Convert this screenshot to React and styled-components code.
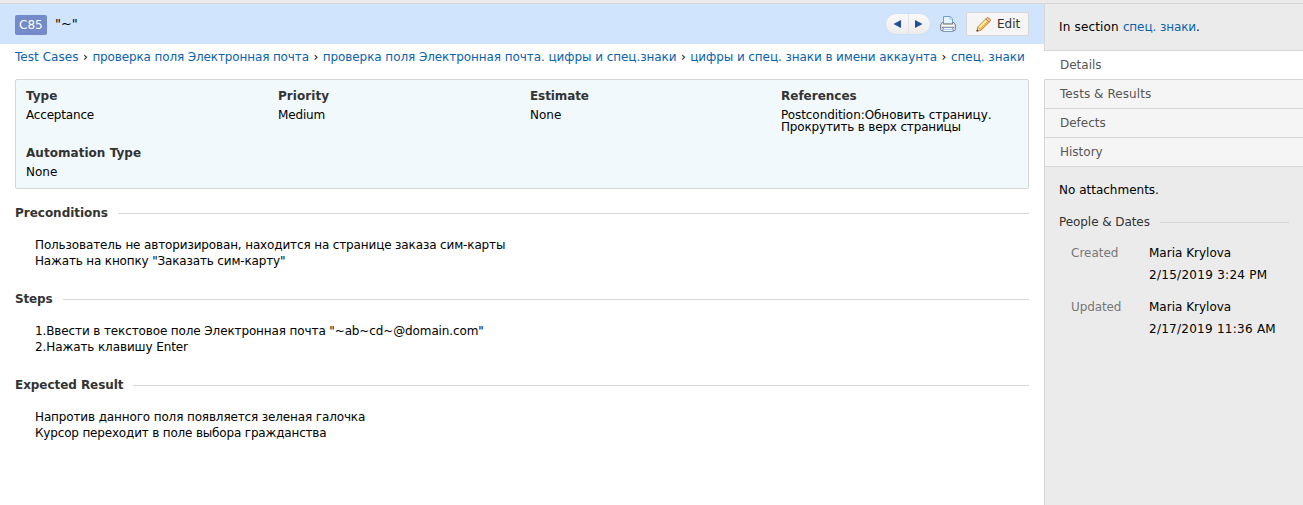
import React from "react";
import styled, { createGlobalStyle } from "styled-components";

const Global = createGlobalStyle`
  * { box-sizing: border-box; }
  body {
    margin: 0;
    background: #fff;
    color: #000;
    font: 12px/12px Verdana, "DejaVu Sans", sans-serif;
    overflow: hidden;
  }
`;

const Page = styled.div`
  display: flex;
  flex-direction: column;
  height: 505px;
`;
const TopStrip = styled.div`
  flex: 0 0 4px;
  background: #ebebeb;
  border-bottom: 1px solid #d6d6d6;
`;
const Columns = styled.div`
  flex: 1;
  display: flex;
`;
const Main = styled.main`
  width: 1044px;
`;
const Text = styled.span`
  letter-spacing: ${(p) => p.$ls || 0}px;
  white-space: nowrap;
`;
const Header = styled.header`
  display: flex;
  align-items: center;
  height: 40px;
  padding: 0 15px;
  background: #d0e4fd;
`;
const CaseId = styled.span`
  width: 32px;
  height: 20px;
  padding-left: 4px;
  border-radius: 2px;
  background: #738acb;
  color: #fff;
  line-height: 20px;
  margin: 2px 8px 0 0;
`;
const Title = styled.h1`
  flex: 1;
  margin: 0;
  font-size: 13px;
  font-weight: normal;
`;
const Pager = styled.div`
  display: flex;
  width: 44px;
  height: 20px;
  border-radius: 10px;
  overflow: hidden;
  background: linear-gradient(#fafafa, #ececec);
  box-shadow: 0 0 1px #b9c3d0;
  margin-right: 10px;
`;
const PagerButton = styled.span`
  flex: 1;
  display: flex;
  align-items: center;
  justify-content: center;
  & + & { border-left: 1px solid #dfe4ea; }
`;
const EditButton = styled.span`
  display: flex;
  align-items: center;
  width: 63px;
  height: 24px;
  margin-left: 10px;
  padding-left: 9px;
  gap: 6px;
  border: 1px solid #d6d6d6;
  border-radius: 2px;
  background: #f5f5f5;
  color: #333;
`;
const Breadcrumb = styled.nav`
  height: 35px;
  padding: 7px 15px 0;
  white-space: nowrap;
`;
const Separator = styled.span`
  margin: 0 0.7px;
`;
const Link = styled.a`
  color: #0b62ad;
  letter-spacing: ${(p) => p.$ls || 0}px;
`;
const Info = styled.section`
  display: grid;
  grid-template-columns: 252px 252px 251px 1fr;
  grid-template-rows: 57px 1fr;
  height: 110px;
  margin: 0 15px;
  padding: 10px 0 0 10px;
  border: 1px solid #d6d6d6;
  border-radius: 2px;
  background: #f1f9fd;
`;
const FieldName = styled.div`
  margin-bottom: 7px;
  font-weight: bold;
  color: #333;
`;
const Section = styled.section`
  height: 86px;
  padding: 18px 15px 0;
`;
const Heading = styled.h2`
  display: flex;
  align-items: center;
  gap: 10px;
  margin: 0;
  font-size: 12px;
  line-height: 12px;
  font-weight: ${(p) => (p.$light ? "normal" : "bold")};
  color: #333;
  &::after {
    content: "";
    flex: 1;
    height: 1px;
    margin-top: 1px;
    background: #d6d6d6;
  }
`;
const Body = styled.div`
  padding: 18px 20px 0;
  line-height: 16px;
`;
const Sidebar = styled.aside`
  width: 259px;
  background: #ebebeb;
  display: flex;
  flex-direction: column;
`;
const SectionNote = styled.div`
  height: 47px;
  padding: 17px 14px 0;
  border-left: 1px solid #d6d6d6;
  border-bottom: 1px solid #d6d6d6;
`;
const Tab = styled.div`
  height: 29px;
  padding: 8px 15px 0;
  border-left: 1px solid ${(p) => (p.$active ? "#fff" : "#d6d6d6")};
  border-bottom: 1px solid #d6d6d6;
  background: ${(p) => (p.$active ? "#fff" : "#f5f5f5")};
  color: #555;
`;
const Details = styled.div`
  flex: 1;
  padding: 17px 14px 0;
  border-left: 1px solid #d6d6d6;
`;
const Attachments = styled.div`
  margin-bottom: 20px;
`;
const Person = styled.div`
  display: grid;
  grid-template-columns: 78px 1fr;
  height: 54px;
  padding-left: 12px;
  line-height: 22px;
`;
const People = styled.div`
  padding-top: 14px;
`;
const Label = styled.span`
  color: #777;
  letter-spacing: ${(p) => p.$ls || 0}px;
`;

const Arrow = ({ left }) => (
  <svg width="8" height="8" viewBox="0 0 8 8">
    <path d={left ? "M8 0V8L0.500 4Z" : "M0 0V8L7.500 4Z"} fill="#244f95" />
  </svg>
);

const Printer = () => (
  <svg width="16" height="16" viewBox="0 0 16 16">
    <path d="M3.500 8V.5H10.500l2 2V8z" fill="#e6f2fe" stroke="#6d9fd6" />
    <path d="M10 .5V3h2.500" fill="#fff" stroke="#8db5e2" />
    <path d="M2 6.500h1.500v1.500h9V6.500H14L15.500 9v4.500q0 1-1 1h-13q-1 0-1-1V9z" fill="#dcdee1" stroke="#7b828c" />
    <path d="M1.500 9.500h13" stroke="#fafafa" />
    <path d="M2 11.500h12" stroke="#6d747e" />
    <path d="M3.500 11.500h9l.8 4H2.700z" fill="#f3f8fd" stroke="#7f98b5" />
    <path d="M4 13.500h8" stroke="#b4d0ec" />
  </svg>
);

const Pencil = () => (
  <svg width="15" height="15" viewBox="0 0 16 16">
    <path d="M1 15l1-4.500L10.500 2l3.500 3.500L5.500 14z" fill="#f9cf66" stroke="#bd7b25" />
    <path d="M3.500 11L11 3.500" stroke="#ffefb5" strokeWidth="1.800" />
    <path d="M5 12.500L12.500 5" stroke="#e9a13b" />
    <path d="M10.500 2l1-1q1-.8 2 0l1.500 1.500q.8 1 0 2l-1 1z" fill="#ecc4a4" stroke="#b9783f" />
    <path d="M2 10.800L5.200 14 1 15z" fill="#f7dfbd" stroke="#b98143" strokeWidth=".6" />
    <path d="M.5 15.500l.7-2.500 1.800 1.800z" fill="#444" />
  </svg>
);

const crumbs = [
  ["Test Cases", 0.05],
  ["проверка поля Электронная почта", -0.13],
  ["проверка поля Электронная почта. цифры и спец.знаки", -0.07],
  ["цифры и спец. знаки в имени аккаунта", -0.085],
  ["спец. знаки", -0.03],
];

const fields = [
  ["Type", 0, [["Acceptance", -0.18]]],
  ["Priority", 0.05, [["Medium", -0.15]]],
  ["Estimate", -0.1, [["None", 0]]],
  ["References", 0, [["Postcondition:Обновить страницу.", -0.07], ["Прокрутить в верх страницы", -0.17]]],
  ["Automation Type", 0.04, [["None", 0]]],
];

const sections = [
  ["Preconditions", -0.02, [
    ["Пользователь не авторизирован, находится на странице заказа сим-карты", -0.137],
    ['Нажать на кнопку "Заказать сим-карту"', -0.16],
  ]],
  ["Steps", -0.15, [
    ['1.Ввести в текстовое поле Электронная почта "~ab~cd~@domain.com"', -0.12],
    ["2.Нажать клавишу Enter", -0.1],
  ]],
  ["Expected Result", -0.06, [
    ["Напротив данного поля появляется зеленая галочка", -0.135],
    ["Курсор переходит в поле выбора гражданства", -0.175],
  ]],
];

const tabs = [["Details", 0], ["Tests & Results", 0.07], ["Defects", 0], ["History", 0]];

const people = [
  ["Created", 0, "Maria Krylova", 0, "2/15/2019 3:24 PM", 0.28],
  ["Updated", -0.1, "Maria Krylova", 0, "2/17/2019 11:36 AM", 0.26],
];

const Lines = ({ lines }) =>
  lines.map(([t, ls]) => (
    <div key={t}><Text $ls={ls}>{t}</Text></div>
  ));

export default function App() {
  return (
    <Page>
      <Global />
      <TopStrip />
      <Columns>
        <Main>
          <Header>
            <CaseId><Text>C85</Text></CaseId>
            <Title>"~"</Title>
            <Pager>
              <PagerButton><Arrow left /></PagerButton>
              <PagerButton><Arrow /></PagerButton>
            </Pager>
            <Printer />
            <EditButton><Pencil /><Text>Edit</Text></EditButton>
          </Header>
          <Breadcrumb>
            {crumbs.map(([t, ls], i) => (
              <React.Fragment key={t}>
                {i > 0 && <Separator> › </Separator>}
                <Link $ls={ls}>{t}</Link>
              </React.Fragment>
            ))}
          </Breadcrumb>
          <Info>
            {fields.map(([name, ls, lines]) => (
              <div key={name}>
                <FieldName><Text $ls={ls}>{name}</Text></FieldName>
                <Lines lines={lines} />
              </div>
            ))}
          </Info>
          {sections.map(([name, ls, lines]) => (
            <Section key={name}>
              <Heading><Text $ls={ls}>{name}</Text></Heading>
              <Body><Lines lines={lines} /></Body>
            </Section>
          ))}
        </Main>
        <Sidebar>
          <SectionNote>
            <Text $ls={0.17}>In section </Text><Link $ls={-0.1}>спец. знаки</Link>.
          </SectionNote>
          {tabs.map(([t, ls], i) => (
            <Tab key={t} $active={i === 0}><Text $ls={ls}>{t}</Text></Tab>
          ))}
          <Details>
            <Attachments><Text>No attachments.</Text></Attachments>
            <Heading $light><Text $ls={-0.07}>People & Dates</Text></Heading>
            <People>
              {people.map(([label, l1, who, l2, when, l3]) => (
                <Person key={label}>
                  <Label $ls={l1}>{label}</Label>
                  <div>
                    <div><Text $ls={l2}>{who}</Text></div>
                    <div><Text $ls={l3}>{when}</Text></div>
                  </div>
                </Person>
              ))}
            </People>
          </Details>
        </Sidebar>
      </Columns>
    </Page>
  );
}
